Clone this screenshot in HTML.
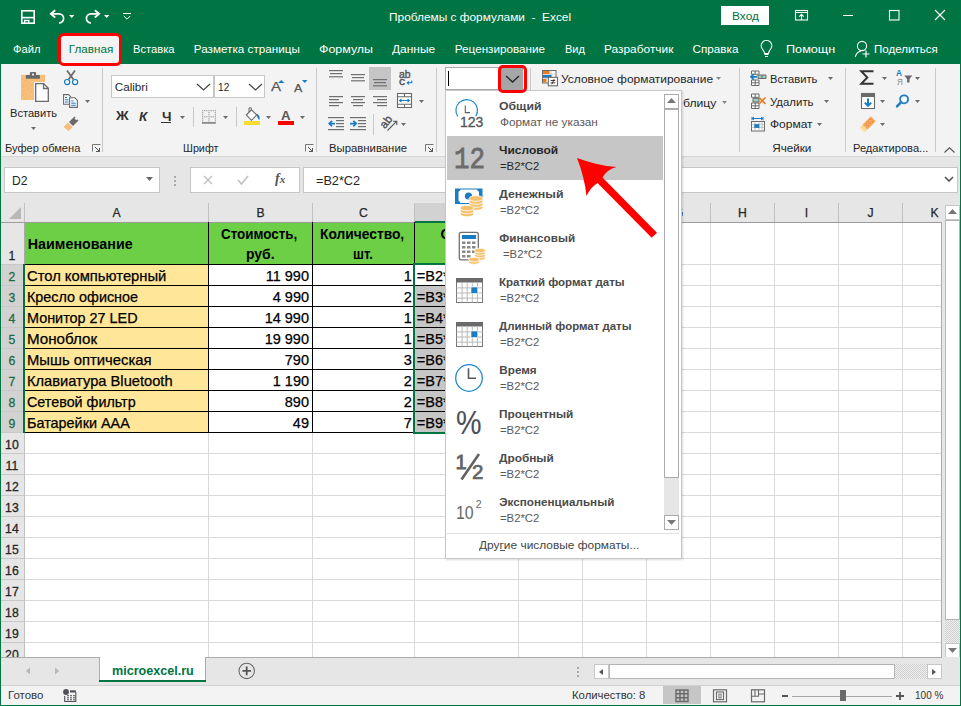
<!DOCTYPE html><html><head><meta charset="utf-8"><style>*{margin:0;padding:0;box-sizing:border-box}html,body{width:961px;height:706px;overflow:hidden;background:#fff;font-family:"Liberation Sans",sans-serif}.a{position:absolute;display:block}.t{position:absolute;white-space:nowrap;line-height:1}</style></head><body>
<div class="a" style="left:0px;top:0px;width:961px;height:64px;background:#007442;"></div>
<div class="a" style="left:1px;top:64px;width:959px;height:92px;background:#f3f3f3;"></div>
<div class="a" style="left:1px;top:156px;width:959px;height:1px;background:#d5d5d5;"></div>
<div class="a" style="left:1px;top:157px;width:959px;height:46px;background:#e6e6e6;"></div>
<div class="t" style="left:388.70px;top:10.90px;font-size:11.7px;color:#fff;transform:scaleX(1.0152);transform-origin:0 0;">Проблемы&#160;с&#160;формулами&#160;&#160;-&#160;&#160;Excel</div>
<div class="a" style="left:721px;top:6px;width:48px;height:19px;background:#fff;"></div>
<div class="t" style="left:731.50px;top:10.10px;font-size:11.7px;color:#007442;transform:scaleX(1.0202);transform-origin:0 0;">Вход</div>
<div class="t" style="left:13.20px;top:43.10px;font-size:11.7px;color:#fff;transform:scaleX(0.9561);transform-origin:0 0;">Файл</div>
<div class="t" style="left:132.80px;top:43.10px;font-size:11.7px;color:#fff;transform:scaleX(0.9566);transform-origin:0 0;">Вставка</div>
<div class="t" style="left:193.80px;top:43.10px;font-size:11.7px;color:#fff;">Разметка страницы</div>
<div class="t" style="left:319.40px;top:43.10px;font-size:11.7px;color:#fff;transform:scaleX(1.0607);transform-origin:0 0;">Формулы</div>
<div class="t" style="left:392.40px;top:43.10px;font-size:11.7px;color:#fff;transform:scaleX(1.0221);transform-origin:0 0;">Данные</div>
<div class="t" style="left:454.80px;top:43.10px;font-size:11.7px;color:#fff;">Рецензирование</div>
<div class="t" style="left:564.70px;top:43.10px;font-size:11.7px;color:#fff;transform:scaleX(0.9449);transform-origin:0 0;">Вид</div>
<div class="t" style="left:603.90px;top:43.10px;font-size:11.7px;color:#fff;transform:scaleX(1.0187);transform-origin:0 0;">Разработчик</div>
<div class="t" style="left:692.60px;top:43.10px;font-size:11.7px;color:#fff;">Справка</div>
<div class="t" style="left:786.10px;top:43.10px;font-size:11.7px;color:#fff;transform:scaleX(1.0823);transform-origin:0 0;">Помощн</div>
<div class="t" style="left:874.40px;top:43.10px;font-size:11.7px;color:#fff;transform:scaleX(0.9876);transform-origin:0 0;">Поделиться</div>
<div class="a" style="left:58px;top:33px;width:64px;height:33px;background:#f3f3f3;border:3px solid #ff0000;border-radius:6px;"></div>
<div class="t" style="left:68.80px;top:43.10px;font-size:11.7px;color:#007442;">Главная</div>
<div class="a" style="left:1px;top:203px;width:941px;height:19px;background:#e6e6e6;"></div>
<div class="a" style="left:24px;top:222px;width:918px;height:435px;background:#fff;"></div>
<div class="a" style="left:1px;top:222px;width:23px;height:435px;background:#e6e6e6;"></div>
<div class="a" style="left:415px;top:203px;width:103px;height:18px;background:#d2d2d2;"></div>
<div class="a" style="left:1px;top:264px;width:22px;height:168px;background:#d2d2d2;"></div>
<div class="a" style="left:208px;top:222px;width:1px;height:435px;background:#d9d9d9;"></div>
<div class="a" style="left:312px;top:222px;width:1px;height:435px;background:#d9d9d9;"></div>
<div class="a" style="left:414px;top:222px;width:1px;height:435px;background:#d9d9d9;"></div>
<div class="a" style="left:518px;top:222px;width:1px;height:435px;background:#d9d9d9;"></div>
<div class="a" style="left:582px;top:222px;width:1px;height:435px;background:#d9d9d9;"></div>
<div class="a" style="left:646px;top:222px;width:1px;height:435px;background:#d9d9d9;"></div>
<div class="a" style="left:710px;top:222px;width:1px;height:435px;background:#d9d9d9;"></div>
<div class="a" style="left:774px;top:222px;width:1px;height:435px;background:#d9d9d9;"></div>
<div class="a" style="left:838px;top:222px;width:1px;height:435px;background:#d9d9d9;"></div>
<div class="a" style="left:902px;top:222px;width:1px;height:435px;background:#d9d9d9;"></div>
<div class="a" style="left:24px;top:203px;width:1px;height:19px;background:#c0c0c0;"></div>
<div class="a" style="left:208px;top:203px;width:1px;height:19px;background:#c0c0c0;"></div>
<div class="a" style="left:312px;top:203px;width:1px;height:19px;background:#c0c0c0;"></div>
<div class="a" style="left:414px;top:203px;width:1px;height:19px;background:#c0c0c0;"></div>
<div class="a" style="left:518px;top:203px;width:1px;height:19px;background:#c0c0c0;"></div>
<div class="a" style="left:582px;top:203px;width:1px;height:19px;background:#c0c0c0;"></div>
<div class="a" style="left:646px;top:203px;width:1px;height:19px;background:#c0c0c0;"></div>
<div class="a" style="left:710px;top:203px;width:1px;height:19px;background:#c0c0c0;"></div>
<div class="a" style="left:774px;top:203px;width:1px;height:19px;background:#c0c0c0;"></div>
<div class="a" style="left:838px;top:203px;width:1px;height:19px;background:#c0c0c0;"></div>
<div class="a" style="left:902px;top:203px;width:1px;height:19px;background:#c0c0c0;"></div>
<div class="a" style="left:24px;top:222px;width:1px;height:435px;background:#c0c0c0;"></div>
<div class="a" style="left:25px;top:264px;width:917px;height:1px;background:#d9d9d9;"></div>
<div class="a" style="left:1px;top:264px;width:23px;height:1px;background:#c8c8c8;"></div>
<div class="a" style="left:25px;top:285px;width:917px;height:1px;background:#d9d9d9;"></div>
<div class="a" style="left:1px;top:285px;width:23px;height:1px;background:#c8c8c8;"></div>
<div class="a" style="left:25px;top:306px;width:917px;height:1px;background:#d9d9d9;"></div>
<div class="a" style="left:1px;top:306px;width:23px;height:1px;background:#c8c8c8;"></div>
<div class="a" style="left:25px;top:327px;width:917px;height:1px;background:#d9d9d9;"></div>
<div class="a" style="left:1px;top:327px;width:23px;height:1px;background:#c8c8c8;"></div>
<div class="a" style="left:25px;top:348px;width:917px;height:1px;background:#d9d9d9;"></div>
<div class="a" style="left:1px;top:348px;width:23px;height:1px;background:#c8c8c8;"></div>
<div class="a" style="left:25px;top:369px;width:917px;height:1px;background:#d9d9d9;"></div>
<div class="a" style="left:1px;top:369px;width:23px;height:1px;background:#c8c8c8;"></div>
<div class="a" style="left:25px;top:390px;width:917px;height:1px;background:#d9d9d9;"></div>
<div class="a" style="left:1px;top:390px;width:23px;height:1px;background:#c8c8c8;"></div>
<div class="a" style="left:25px;top:411px;width:917px;height:1px;background:#d9d9d9;"></div>
<div class="a" style="left:1px;top:411px;width:23px;height:1px;background:#c8c8c8;"></div>
<div class="a" style="left:25px;top:432px;width:917px;height:1px;background:#d9d9d9;"></div>
<div class="a" style="left:1px;top:432px;width:23px;height:1px;background:#c8c8c8;"></div>
<div class="a" style="left:25px;top:453px;width:917px;height:1px;background:#d9d9d9;"></div>
<div class="a" style="left:1px;top:453px;width:23px;height:1px;background:#c8c8c8;"></div>
<div class="a" style="left:25px;top:474px;width:917px;height:1px;background:#d9d9d9;"></div>
<div class="a" style="left:1px;top:474px;width:23px;height:1px;background:#c8c8c8;"></div>
<div class="a" style="left:25px;top:495px;width:917px;height:1px;background:#d9d9d9;"></div>
<div class="a" style="left:1px;top:495px;width:23px;height:1px;background:#c8c8c8;"></div>
<div class="a" style="left:25px;top:516px;width:917px;height:1px;background:#d9d9d9;"></div>
<div class="a" style="left:1px;top:516px;width:23px;height:1px;background:#c8c8c8;"></div>
<div class="a" style="left:25px;top:537px;width:917px;height:1px;background:#d9d9d9;"></div>
<div class="a" style="left:1px;top:537px;width:23px;height:1px;background:#c8c8c8;"></div>
<div class="a" style="left:25px;top:558px;width:917px;height:1px;background:#d9d9d9;"></div>
<div class="a" style="left:1px;top:558px;width:23px;height:1px;background:#c8c8c8;"></div>
<div class="a" style="left:25px;top:579px;width:917px;height:1px;background:#d9d9d9;"></div>
<div class="a" style="left:1px;top:579px;width:23px;height:1px;background:#c8c8c8;"></div>
<div class="a" style="left:25px;top:600px;width:917px;height:1px;background:#d9d9d9;"></div>
<div class="a" style="left:1px;top:600px;width:23px;height:1px;background:#c8c8c8;"></div>
<div class="a" style="left:25px;top:621px;width:917px;height:1px;background:#d9d9d9;"></div>
<div class="a" style="left:1px;top:621px;width:23px;height:1px;background:#c8c8c8;"></div>
<div class="a" style="left:25px;top:642px;width:917px;height:1px;background:#d9d9d9;"></div>
<div class="a" style="left:1px;top:642px;width:23px;height:1px;background:#c8c8c8;"></div>
<div class="a" style="left:1px;top:222px;width:941px;height:1px;background:#9b9b9b;"></div>
<div class="a" style="left:941px;top:222px;width:1px;height:435px;background:#ababab;"></div>
<div class="a" style="left:942px;top:203px;width:18px;height:454px;background:#e6e6e6;"></div>
<div class="a" style="left:25px;top:223px;width:389px;height:41px;background:#6ccf46;"></div>
<div class="a" style="left:415px;top:223px;width:103px;height:41px;background:#6ccf46;"></div>
<div class="a" style="left:25px;top:265px;width:183px;height:20px;background:#ffe699;"></div>
<div class="a" style="left:25px;top:286px;width:183px;height:20px;background:#ffe699;"></div>
<div class="a" style="left:25px;top:307px;width:183px;height:20px;background:#ffe699;"></div>
<div class="a" style="left:25px;top:328px;width:183px;height:20px;background:#ffe699;"></div>
<div class="a" style="left:25px;top:349px;width:183px;height:20px;background:#ffe699;"></div>
<div class="a" style="left:25px;top:370px;width:183px;height:20px;background:#ffe699;"></div>
<div class="a" style="left:25px;top:391px;width:183px;height:20px;background:#ffe699;"></div>
<div class="a" style="left:25px;top:412px;width:183px;height:20px;background:#ffe699;"></div>
<div class="a" style="left:24px;top:222px;width:1px;height:211px;background:#000;"></div>
<div class="a" style="left:208px;top:222px;width:1px;height:211px;background:#000;"></div>
<div class="a" style="left:312px;top:222px;width:1px;height:211px;background:#000;"></div>
<div class="a" style="left:414px;top:222px;width:1px;height:211px;background:#000;"></div>
<div class="a" style="left:518px;top:222px;width:1px;height:211px;background:#000;"></div>
<div class="a" style="left:24px;top:264px;width:495px;height:1px;background:#000;"></div>
<div class="a" style="left:24px;top:285px;width:495px;height:1px;background:#000;"></div>
<div class="a" style="left:24px;top:306px;width:495px;height:1px;background:#000;"></div>
<div class="a" style="left:24px;top:327px;width:495px;height:1px;background:#000;"></div>
<div class="a" style="left:24px;top:348px;width:495px;height:1px;background:#000;"></div>
<div class="a" style="left:24px;top:369px;width:495px;height:1px;background:#000;"></div>
<div class="a" style="left:24px;top:390px;width:495px;height:1px;background:#000;"></div>
<div class="a" style="left:24px;top:411px;width:495px;height:1px;background:#000;"></div>
<div class="a" style="left:24px;top:432px;width:495px;height:1px;background:#000;"></div>
<div class="a" style="left:24px;top:222px;width:1px;height:42px;background:#ababab;"></div>
<div class="a" style="left:415px;top:286px;width:103px;height:20px;background:#c6c6c6;"></div>
<div class="a" style="left:415px;top:307px;width:103px;height:20px;background:#c6c6c6;"></div>
<div class="a" style="left:415px;top:328px;width:103px;height:20px;background:#c6c6c6;"></div>
<div class="a" style="left:415px;top:349px;width:103px;height:20px;background:#c6c6c6;"></div>
<div class="a" style="left:415px;top:370px;width:103px;height:20px;background:#c6c6c6;"></div>
<div class="a" style="left:415px;top:391px;width:103px;height:20px;background:#c6c6c6;"></div>
<div class="a" style="left:415px;top:412px;width:103px;height:20px;background:#c6c6c6;"></div>
<div class="a" style="left:413px;top:263px;width:2px;height:171px;background:#007442;"></div>
<div class="a" style="left:413px;top:263px;width:106px;height:2px;background:#007442;"></div>
<div class="a" style="left:413px;top:432px;width:106px;height:2px;background:#007442;"></div>
<div class="a" style="left:517px;top:263px;width:2px;height:171px;background:#007442;"></div>
<div class="a" style="left:415px;top:221px;width:103px;height:2px;background:#007442;"></div>
<div class="a" style="left:23px;top:264px;width:2px;height:169px;background:#007442;"></div>
<div class="t" style="left:112.43px;top:207.37px;font-size:12.2px;color:#262626;-webkit-text-stroke:0.25px #262626;">A</div>
<div class="t" style="left:256.43px;top:207.37px;font-size:12.2px;color:#262626;-webkit-text-stroke:0.25px #262626;">B</div>
<div class="t" style="left:359.09px;top:207.37px;font-size:12.2px;color:#262626;-webkit-text-stroke:0.25px #262626;">C</div>
<div class="t" style="left:462.09px;top:207.37px;font-size:12.2px;color:#007442;-webkit-text-stroke:0.25px #007442;">D</div>
<div class="t" style="left:546.43px;top:207.37px;font-size:12.2px;color:#262626;-webkit-text-stroke:0.25px #262626;">E</div>
<div class="t" style="left:610.77px;top:207.37px;font-size:12.2px;color:#262626;-webkit-text-stroke:0.25px #262626;">F</div>
<div class="t" style="left:673.76px;top:207.37px;font-size:12.2px;color:#262626;-webkit-text-stroke:0.25px #262626;">G</div>
<div class="t" style="left:738.09px;top:207.37px;font-size:12.2px;color:#262626;-webkit-text-stroke:0.25px #262626;">H</div>
<div class="t" style="left:804.81px;top:207.37px;font-size:12.2px;color:#262626;-webkit-text-stroke:0.25px #262626;">I</div>
<div class="t" style="left:867.45px;top:207.37px;font-size:12.2px;color:#262626;-webkit-text-stroke:0.25px #262626;">J</div>
<div class="t" style="left:930.43px;top:207.37px;font-size:12.2px;color:#262626;-webkit-text-stroke:0.25px #262626;">K</div>
<div class="t" style="left:8.51px;top:250.07px;font-size:12.2px;color:#262626;-webkit-text-stroke:0.3px #262626;">1</div>
<div class="t" style="left:8.51px;top:271.07px;font-size:12.2px;color:#1d6b3f;-webkit-text-stroke:0.3px #1d6b3f;">2</div>
<div class="t" style="left:8.51px;top:292.07px;font-size:12.2px;color:#1d6b3f;-webkit-text-stroke:0.3px #1d6b3f;">3</div>
<div class="t" style="left:8.51px;top:313.07px;font-size:12.2px;color:#1d6b3f;-webkit-text-stroke:0.3px #1d6b3f;">4</div>
<div class="t" style="left:8.51px;top:334.07px;font-size:12.2px;color:#1d6b3f;-webkit-text-stroke:0.3px #1d6b3f;">5</div>
<div class="t" style="left:8.51px;top:355.07px;font-size:12.2px;color:#1d6b3f;-webkit-text-stroke:0.3px #1d6b3f;">6</div>
<div class="t" style="left:8.51px;top:376.07px;font-size:12.2px;color:#1d6b3f;-webkit-text-stroke:0.3px #1d6b3f;">7</div>
<div class="t" style="left:8.51px;top:397.07px;font-size:12.2px;color:#1d6b3f;-webkit-text-stroke:0.3px #1d6b3f;">8</div>
<div class="t" style="left:8.51px;top:418.07px;font-size:12.2px;color:#1d6b3f;-webkit-text-stroke:0.3px #1d6b3f;">9</div>
<div class="t" style="left:5.12px;top:439.07px;font-size:12.2px;color:#262626;-webkit-text-stroke:0.3px #262626;">10</div>
<div class="t" style="left:5.57px;top:460.07px;font-size:12.2px;color:#262626;-webkit-text-stroke:0.3px #262626;">11</div>
<div class="t" style="left:5.12px;top:481.07px;font-size:12.2px;color:#262626;-webkit-text-stroke:0.3px #262626;">12</div>
<div class="t" style="left:5.12px;top:502.07px;font-size:12.2px;color:#262626;-webkit-text-stroke:0.3px #262626;">13</div>
<div class="t" style="left:5.12px;top:523.07px;font-size:12.2px;color:#262626;-webkit-text-stroke:0.3px #262626;">14</div>
<div class="t" style="left:5.12px;top:544.07px;font-size:12.2px;color:#262626;-webkit-text-stroke:0.3px #262626;">15</div>
<div class="t" style="left:5.12px;top:565.07px;font-size:12.2px;color:#262626;-webkit-text-stroke:0.3px #262626;">16</div>
<div class="t" style="left:5.12px;top:586.07px;font-size:12.2px;color:#262626;-webkit-text-stroke:0.3px #262626;">17</div>
<div class="t" style="left:5.12px;top:607.07px;font-size:12.2px;color:#262626;-webkit-text-stroke:0.3px #262626;">18</div>
<div class="t" style="left:5.12px;top:628.07px;font-size:12.2px;color:#262626;-webkit-text-stroke:0.3px #262626;">19</div>
<div class="t" style="left:5.12px;top:649.07px;font-size:12.2px;color:#262626;-webkit-text-stroke:0.3px #262626;">20</div>
<div class="t" style="left:27.80px;top:236.90px;font-size:14.3px;color:#000;font-weight:bold;">Наименование</div>
<div class="t" style="left:221.35px;top:226.70px;font-size:14.3px;color:#000;font-weight:bold;transform:scaleX(0.9383);transform-origin:0 0;">Стоимость,</div>
<div class="t" style="left:245.70px;top:246.80px;font-size:14.3px;color:#000;font-weight:bold;transform:scaleX(0.9760);transform-origin:0 0;">руб.</div>
<div class="t" style="left:320.40px;top:226.70px;font-size:14.3px;color:#000;font-weight:bold;transform:scaleX(0.9644);transform-origin:0 0;">Количество,</div>
<div class="t" style="left:353.05px;top:246.80px;font-size:14.3px;color:#000;font-weight:bold;transform:scaleX(0.9197);transform-origin:0 0;">шт.</div>
<div class="t" style="left:440.51px;top:226.70px;font-size:14.3px;color:#000;font-weight:bold;">Сумма,</div>
<div class="t" style="left:27.30px;top:269.13px;font-size:14.5px;color:#000;transform:scaleX(1.0182);transform-origin:0 0;-webkit-text-stroke:0.25px #000;">Стол компьютерный</div>
<div class="t" style="left:265.73px;top:269.13px;font-size:14.5px;color:#000;-webkit-text-stroke:0.25px #000;">11 990</div>
<div class="t" style="left:403.74px;top:269.13px;font-size:14.5px;color:#000;-webkit-text-stroke:0.25px #000;">1</div>
<div class="t" style="left:416.80px;top:269.13px;font-size:14.5px;color:#000;-webkit-text-stroke:0.25px #000;">=B2*C2</div>
<div class="t" style="left:27.30px;top:290.13px;font-size:14.5px;color:#000;transform:scaleX(0.9909);transform-origin:0 0;-webkit-text-stroke:0.25px #000;">Кресло офисное</div>
<div class="t" style="left:272.72px;top:290.13px;font-size:14.5px;color:#000;-webkit-text-stroke:0.25px #000;">4 990</div>
<div class="t" style="left:403.74px;top:290.13px;font-size:14.5px;color:#000;-webkit-text-stroke:0.25px #000;">2</div>
<div class="t" style="left:416.80px;top:290.13px;font-size:14.5px;color:#000;-webkit-text-stroke:0.25px #000;">=B3*C3</div>
<div class="t" style="left:27.30px;top:311.13px;font-size:14.5px;color:#000;transform:scaleX(0.9928);transform-origin:0 0;-webkit-text-stroke:0.25px #000;">Монитор 27 LED</div>
<div class="t" style="left:264.65px;top:311.13px;font-size:14.5px;color:#000;-webkit-text-stroke:0.25px #000;">14 990</div>
<div class="t" style="left:403.74px;top:311.13px;font-size:14.5px;color:#000;-webkit-text-stroke:0.25px #000;">1</div>
<div class="t" style="left:416.80px;top:311.13px;font-size:14.5px;color:#000;-webkit-text-stroke:0.25px #000;">=B4*C4</div>
<div class="t" style="left:27.30px;top:332.13px;font-size:14.5px;color:#000;transform:scaleX(1.0453);transform-origin:0 0;-webkit-text-stroke:0.25px #000;">Моноблок</div>
<div class="t" style="left:264.65px;top:332.13px;font-size:14.5px;color:#000;-webkit-text-stroke:0.25px #000;">19 990</div>
<div class="t" style="left:403.74px;top:332.13px;font-size:14.5px;color:#000;-webkit-text-stroke:0.25px #000;">1</div>
<div class="t" style="left:416.80px;top:332.13px;font-size:14.5px;color:#000;-webkit-text-stroke:0.25px #000;">=B5*C5</div>
<div class="t" style="left:27.30px;top:353.13px;font-size:14.5px;color:#000;transform:scaleX(1.0229);transform-origin:0 0;-webkit-text-stroke:0.25px #000;">Мышь оптическая</div>
<div class="t" style="left:284.81px;top:353.13px;font-size:14.5px;color:#000;-webkit-text-stroke:0.25px #000;">790</div>
<div class="t" style="left:403.74px;top:353.13px;font-size:14.5px;color:#000;-webkit-text-stroke:0.25px #000;">3</div>
<div class="t" style="left:416.80px;top:353.13px;font-size:14.5px;color:#000;-webkit-text-stroke:0.25px #000;">=B6*C6</div>
<div class="t" style="left:27.30px;top:374.13px;font-size:14.5px;color:#000;transform:scaleX(1.0123);transform-origin:0 0;-webkit-text-stroke:0.25px #000;">Клавиатура Bluetooth</div>
<div class="t" style="left:272.72px;top:374.13px;font-size:14.5px;color:#000;-webkit-text-stroke:0.25px #000;">1 190</div>
<div class="t" style="left:403.74px;top:374.13px;font-size:14.5px;color:#000;-webkit-text-stroke:0.25px #000;">2</div>
<div class="t" style="left:416.80px;top:374.13px;font-size:14.5px;color:#000;-webkit-text-stroke:0.25px #000;">=B7*C7</div>
<div class="t" style="left:27.30px;top:395.13px;font-size:14.5px;color:#000;transform:scaleX(0.9878);transform-origin:0 0;-webkit-text-stroke:0.25px #000;">Сетевой фильтр</div>
<div class="t" style="left:284.81px;top:395.13px;font-size:14.5px;color:#000;-webkit-text-stroke:0.25px #000;">890</div>
<div class="t" style="left:403.74px;top:395.13px;font-size:14.5px;color:#000;-webkit-text-stroke:0.25px #000;">2</div>
<div class="t" style="left:416.80px;top:395.13px;font-size:14.5px;color:#000;-webkit-text-stroke:0.25px #000;">=B8*C8</div>
<div class="t" style="left:27.30px;top:416.13px;font-size:14.5px;color:#000;transform:scaleX(0.9931);transform-origin:0 0;-webkit-text-stroke:0.25px #000;">Батарейки AAA</div>
<div class="t" style="left:292.87px;top:416.13px;font-size:14.5px;color:#000;-webkit-text-stroke:0.25px #000;">49</div>
<div class="t" style="left:403.74px;top:416.13px;font-size:14.5px;color:#000;-webkit-text-stroke:0.25px #000;">7</div>
<div class="t" style="left:416.80px;top:416.13px;font-size:14.5px;color:#000;-webkit-text-stroke:0.25px #000;">=B9*C9</div>
<div class="a" style="left:4px;top:167px;width:156px;height:26px;background:#fff;border:1px solid #c6c6c6;"></div>
<div class="t" style="left:11.50px;top:174.30px;font-size:13px;color:#262626;transform:scaleX(0.9327);transform-origin:0 0;">D2</div>
<svg class="a" style="left:146px;top:177px;" width="7" height="4" viewBox="0 0 7 4"><path d="M0 0H7L3.5 4Z" fill="#6a6a6a"/></svg>
<div class="a" style="left:174px;top:176px;width:2px;height:2px;background:#a8a8a8;"></div>
<div class="a" style="left:174px;top:180px;width:2px;height:2px;background:#a8a8a8;"></div>
<div class="a" style="left:174px;top:184px;width:2px;height:2px;background:#a8a8a8;"></div>
<div class="a" style="left:190px;top:167px;width:110px;height:26px;background:#fff;border:1px solid #c6c6c6;"></div>
<svg class="a" style="left:203px;top:175px;" width="10" height="10" viewBox="0 0 10 10"><path d="M1 1L9 9M9 1L1 9" stroke="#c0c0c0" stroke-width="1.3"/></svg>
<svg class="a" style="left:237px;top:175px;" width="12" height="10" viewBox="0 0 12 10"><path d="M1 5L4.5 9L11 1" stroke="#c0c0c0" stroke-width="1.6" fill="none"/></svg>
<div class="t" style="left:275px;top:172px;font-family:'Liberation Serif',serif;font-style:italic;font-weight:bold;font-size:14px;color:#555">f<span style="font-size:11px">x</span></div>
<div class="a" style="left:303px;top:167px;width:655px;height:26px;background:#fff;border:1px solid #c6c6c6;"></div>
<div class="t" style="left:315.50px;top:174.30px;font-size:13px;color:#262626;transform:scaleX(0.9741);transform-origin:0 0;">=B2*C2</div>
<svg class="a" style="left:944px;top:176px;" width="10" height="6" viewBox="0 0 10 6"><path d="M1 1L5 5L9 1" stroke="#555" stroke-width="1.6" fill="none"/></svg>
<svg class="a" style="left:9px;top:207px;" width="13" height="13" viewBox="0 0 13 13"><path d="M12 0V12H0Z" fill="#b8b8b8"/></svg>
<div class="a" style="left:945px;top:205px;width:15px;height:15px;background:#fff;border:1px solid #c6c6c6;"></div>
<svg class="a" style="left:948px;top:209px;" width="9" height="5" viewBox="0 0 9 5"><path d="M0 5H9L4.5 0Z" fill="#777"/></svg>
<div class="a" style="left:945px;top:220px;width:15px;height:400px;background:#fff;border:1px solid #b4b4b4;"></div>
<div class="a" style="left:945px;top:620px;width:15px;height:23px;background:#e4e4e4;background-image:repeating-conic-gradient(#cfcfcf 0 25%, #efefef 0 50%);background-size:2px 2px;"></div>
<div class="a" style="left:945px;top:643px;width:15px;height:15px;background:#fff;border:1px solid #c6c6c6;"></div>
<svg class="a" style="left:948px;top:648px;" width="9" height="5" viewBox="0 0 9 5"><path d="M0 0H9L4.5 5Z" fill="#777"/></svg>
<div class="a" style="left:102px;top:68px;width:1px;height:84px;background:#c8c8c8;"></div>
<div class="a" style="left:316px;top:68px;width:1px;height:84px;background:#c8c8c8;"></div>
<div class="a" style="left:436px;top:68px;width:1px;height:84px;background:#c8c8c8;"></div>
<div class="a" style="left:530px;top:68px;width:1px;height:84px;background:#c8c8c8;"></div>
<div class="a" style="left:739px;top:68px;width:1px;height:84px;background:#c8c8c8;"></div>
<div class="a" style="left:845px;top:68px;width:1px;height:84px;background:#c8c8c8;"></div>
<div class="a" style="left:935px;top:68px;width:1px;height:84px;background:#c8c8c8;"></div>
<div class="t" style="left:4.60px;top:141.80px;font-size:11.7px;color:#262626;transform:scaleX(0.9485);transform-origin:0 0;">Буфер обмена</div>
<svg class="a" style="left:92px;top:144px;" width="9" height="8" viewBox="0 0 9 8"><path d="M0.5 7.5V0.5H8.5" stroke="#777" fill="none"/><path d="M3 3L7.5 7.5M7.5 4V7.5H4" stroke="#555" stroke-width="1" fill="none"/></svg>
<div class="t" style="left:183.00px;top:141.80px;font-size:11.7px;color:#262626;transform:scaleX(0.9222);transform-origin:0 0;">Шрифт</div>
<svg class="a" style="left:305px;top:144px;" width="9" height="8" viewBox="0 0 9 8"><path d="M0.5 7.5V0.5H8.5" stroke="#777" fill="none"/><path d="M3 3L7.5 7.5M7.5 4V7.5H4" stroke="#555" stroke-width="1" fill="none"/></svg>
<div class="t" style="left:329.30px;top:141.80px;font-size:11.7px;color:#262626;transform:scaleX(0.9698);transform-origin:0 0;">Выравнивание</div>
<svg class="a" style="left:425px;top:144px;" width="9" height="8" viewBox="0 0 9 8"><path d="M0.5 7.5V0.5H8.5" stroke="#777" fill="none"/><path d="M3 3L7.5 7.5M7.5 4V7.5H4" stroke="#555" stroke-width="1" fill="none"/></svg>
<div class="t" style="left:772.20px;top:141.80px;font-size:11.7px;color:#262626;">Ячейки</div>
<div class="t" style="left:852.60px;top:141.80px;font-size:11.7px;color:#262626;transform:scaleX(0.9500);transform-origin:0 0;">Редактирова...</div>
<svg class="a" style="left:944px;top:147px;" width="11" height="6" viewBox="0 0 11 6"><path d="M0.5 5.5L5.5 0.8L10.5 5.5" stroke="#555" stroke-width="1.1" fill="none"/></svg>
<div class="t" style="left:9.60px;top:106.80px;font-size:11.7px;color:#262626;transform:scaleX(0.9498);transform-origin:0 0;">Вставить</div>
<svg class="a" style="left:30.5px;top:127px;" width="5" height="3" viewBox="0 0 5 3"><path d="M0 0H5L2.5 3Z" fill="#6a6a6a"/></svg>
<svg class="a" style="left:85px;top:100px;" width="5" height="3" viewBox="0 0 5 3"><path d="M0 0H5L2.5 3Z" fill="#6a6a6a"/></svg>
<div class="a" style="left:111px;top:75px;width:103px;height:23px;background:#fff;border:1px solid #c6c6c6;"></div>
<div class="t" style="left:114.70px;top:81.00px;font-size:11.7px;color:#262626;">Calibri</div>
<svg class="a" style="left:196px;top:83px;" width="15" height="8" viewBox="0 0 15 8"><path d="M1 1L7.5 7L14 1" stroke="#444" stroke-width="1.2" fill="none"/></svg>
<div class="a" style="left:214px;top:75px;width:51px;height:23px;background:#fff;border:1px solid #c6c6c6;"></div>
<div class="t" style="left:217.90px;top:81.00px;font-size:11.7px;color:#262626;transform:scaleX(0.8684);transform-origin:0 0;">12</div>
<svg class="a" style="left:247.5px;top:83px;" width="15" height="8" viewBox="0 0 15 8"><path d="M1 1L7.5 7L14 1" stroke="#444" stroke-width="1.2" fill="none"/></svg>
<div class="t" style="left:115.60px;top:110.32px;font-size:12.5px;color:#333;font-weight:bold;transform:scaleX(1.1154);transform-origin:0 0;">Ж</div>
<div class="t" style="left:139.00px;top:110.74px;font-size:12px;color:#333;font-weight:bold;transform:scaleX(1.1196);transform-origin:0 0;font-style:italic;">К</div>
<div class="t" style="left:161.50px;top:110.74px;font-size:12px;color:#333;font-weight:bold;transform:scaleX(1.1267);transform-origin:0 0;">Ч</div>
<div class="a" style="left:161px;top:122px;width:10px;height:1.3px;background:#333;"></div>
<svg class="a" style="left:180.3px;top:116px;" width="5" height="3" viewBox="0 0 5 3"><path d="M0 0H5L2.5 3Z" fill="#6a6a6a"/></svg>
<div class="a" style="left:193px;top:107px;width:1px;height:20px;background:#c8c8c8;"></div>
<svg class="a" style="left:223.2px;top:116px;" width="5" height="3" viewBox="0 0 5 3"><path d="M0 0H5L2.5 3Z" fill="#6a6a6a"/></svg>
<div class="a" style="left:236px;top:107px;width:1px;height:20px;background:#c8c8c8;"></div>
<svg class="a" style="left:266.2px;top:116px;" width="5" height="3" viewBox="0 0 5 3"><path d="M0 0H5L2.5 3Z" fill="#6a6a6a"/></svg>
<svg class="a" style="left:300.2px;top:116px;" width="5" height="3" viewBox="0 0 5 3"><path d="M0 0H5L2.5 3Z" fill="#6a6a6a"/></svg>
<svg class="a" style="left:419px;top:100px;" width="5" height="3" viewBox="0 0 5 3"><path d="M0 0H5L2.5 3Z" fill="#6a6a6a"/></svg>
<div class="a" style="left:373px;top:114px;width:1px;height:21px;background:#c8c8c8;"></div>
<svg class="a" style="left:401px;top:123px;" width="5" height="3" viewBox="0 0 5 3"><path d="M0 0H5L2.5 3Z" fill="#6a6a6a"/></svg>
<div class="t" style="left:560.80px;top:72.90px;font-size:11.7px;color:#262626;transform:scaleX(1.0226);transform-origin:0 0;">Условное форматирование</div>
<svg class="a" style="left:715.5px;top:77px;" width="5" height="3" viewBox="0 0 5 3"><path d="M0 0H5L2.5 3Z" fill="#888"/></svg>
<div class="t" style="left:683.00px;top:97.10px;font-size:11.7px;color:#262626;transform:scaleX(1.0408);transform-origin:0 0;">блицу</div>
<svg class="a" style="left:722px;top:101px;" width="5" height="3" viewBox="0 0 5 3"><path d="M0 0H5L2.5 3Z" fill="#888"/></svg>
<div class="t" style="left:770.40px;top:72.70px;font-size:11.7px;color:#262626;transform:scaleX(0.9558);transform-origin:0 0;">Вставить</div>
<svg class="a" style="left:828px;top:77px;" width="5" height="3" viewBox="0 0 5 3"><path d="M0 0H5L2.5 3Z" fill="#6a6a6a"/></svg>
<div class="t" style="left:770.40px;top:95.60px;font-size:11.7px;color:#262626;transform:scaleX(0.9761);transform-origin:0 0;">Удалить</div>
<svg class="a" style="left:824px;top:100px;" width="5" height="3" viewBox="0 0 5 3"><path d="M0 0H5L2.5 3Z" fill="#6a6a6a"/></svg>
<div class="t" style="left:770.40px;top:118.30px;font-size:11.7px;color:#262626;transform:scaleX(1.0251);transform-origin:0 0;">Формат</div>
<svg class="a" style="left:816.5px;top:123px;" width="5" height="3" viewBox="0 0 5 3"><path d="M0 0H5L2.5 3Z" fill="#6a6a6a"/></svg>
<svg class="a" style="left:881.8px;top:77px;" width="5" height="3" viewBox="0 0 5 3"><path d="M0 0H5L2.5 3Z" fill="#6a6a6a"/></svg>
<svg class="a" style="left:915px;top:77px;" width="5" height="3" viewBox="0 0 5 3"><path d="M0 0H5L2.5 3Z" fill="#6a6a6a"/></svg>
<svg class="a" style="left:880px;top:100px;" width="5" height="3" viewBox="0 0 5 3"><path d="M0 0H5L2.5 3Z" fill="#6a6a6a"/></svg>
<svg class="a" style="left:915px;top:100px;" width="5" height="3" viewBox="0 0 5 3"><path d="M0 0H5L2.5 3Z" fill="#6a6a6a"/></svg>
<svg class="a" style="left:880px;top:123px;" width="5" height="3" viewBox="0 0 5 3"><path d="M0 0H5L2.5 3Z" fill="#6a6a6a"/></svg>
<div class="a" style="left:1px;top:657px;width:959px;height:28px;background:#e6e6e6;"></div>
<div class="a" style="left:1px;top:657px;width:99px;height:1px;background:#ababab;"></div>
<div class="a" style="left:206px;top:657px;width:736px;height:1px;background:#ababab;"></div>
<div class="a" style="left:1px;top:685px;width:959px;height:1px;background:#d0d0d0;"></div>
<div class="a" style="left:99px;top:657px;width:107px;height:25px;background:#fff;border-left:1px solid #ababab;border-right:1px solid #ababab;"></div>
<div class="a" style="left:99px;top:680px;width:107px;height:2px;background:#007442;"></div>
<div class="t" style="left:111.50px;top:664.54px;font-size:12px;color:#007442;font-weight:bold;transform:scaleX(1.0482);transform-origin:0 0;">microexcel.ru</div>
<div class="a" style="left:1px;top:686px;width:959px;height:19px;background:#f3f3f3;"></div>
<div class="t" style="left:7.75px;top:688.85px;font-size:11.7px;color:#333;transform:scaleX(0.9799);transform-origin:0 0;">Готово</div>
<div class="t" style="left:571.50px;top:688.85px;font-size:11.7px;color:#333;transform:scaleX(0.9692);transform-origin:0 0;">Количество: 8</div>
<div class="t" style="left:914.60px;top:688.85px;font-size:11.7px;color:#333;transform:scaleX(0.8561);transform-origin:0 0;">100 %</div>
<div class="a" style="left:0px;top:0px;width:1px;height:706px;background:#007442;"></div>
<div class="a" style="left:960px;top:0px;width:1px;height:706px;background:#007442;"></div>
<div class="a" style="left:0px;top:705px;width:961px;height:1px;background:#007442;"></div>
<svg class="a" style="left:20px;top:9px;" width="16" height="16" viewBox="0 0 16 16"><rect x="1.8" y="1.8" width="12.4" height="12.4" fill="none" stroke="#ffffff" stroke-width="1.6"/><path d="M2 8.6H14" stroke="#ffffff" stroke-width="1.6"/><path d="M4.6 14V11.5H8.8V14" stroke="#ffffff" stroke-width="1.4" fill="none"/></svg>
<svg class="a" style="left:48px;top:8px;" width="18" height="16" viewBox="0 0 18 16"><path d="M3.5 5.8H11A4.6 4.6 0 0 1 11 15" stroke="#ffffff" stroke-width="1.7" fill="none"/><path d="M7.2 2.2L2.8 5.8L7.2 9.5" stroke="#ffffff" stroke-width="1.8" fill="none"/></svg>
<svg class="a" style="left:69px;top:15px;" width="6" height="3" viewBox="0 0 6 3"><path d="M0 0H5.4L2.7 3Z" fill="#ffffff"/></svg>
<svg class="a" style="left:84px;top:8px;" width="18" height="16" viewBox="0 0 18 16"><path d="M14.5 5.8H7A4.6 4.6 0 0 0 7 15" stroke="#ffffff" stroke-width="1.7" fill="none"/><path d="M10.8 2.2L15.2 5.8L10.8 9.5" stroke="#ffffff" stroke-width="1.8" fill="none"/></svg>
<svg class="a" style="left:104px;top:15px;" width="6" height="3" viewBox="0 0 6 3"><path d="M0 0H5.4L2.7 3Z" fill="#ffffff"/></svg>
<svg class="a" style="left:122px;top:12px;" width="10" height="9" viewBox="0 0 10 9"><path d="M1 1.5H9" stroke="#ffffff" stroke-width="1"/><path d="M1.8 4L5 7.2L8.2 4" stroke="#ffffff" stroke-width="1" fill="none"/></svg>
<svg class="a" style="left:794px;top:9px;" width="15" height="12" viewBox="0 0 15 12"><rect x="1.5" y="1.5" width="12" height="9.5" fill="none" stroke="#ffffff" stroke-width="1.1"/><path d="M1.5 3.5H13.5" stroke="#ffffff" stroke-width="1"/><path d="M7.5 11V5.5M5.3 7.6L7.5 5.4L9.7 7.6" stroke="#ffffff" stroke-width="1.1" fill="none"/></svg>
<div class="a" style="left:843px;top:15px;width:10px;height:1px;background:#ffffff;"></div>
<svg class="a" style="left:888px;top:9px;" width="12" height="12" viewBox="0 0 12 12"><rect x="1.5" y="1.5" width="9.5" height="9.5" fill="none" stroke="#ffffff" stroke-width="1.1"/></svg>
<svg class="a" style="left:934px;top:9px;" width="12" height="12" viewBox="0 0 12 12"><path d="M1 1L11 11M11 1L1 11" stroke="#ffffff" stroke-width="1.1"/></svg>
<svg class="a" style="left:759px;top:40px;" width="15" height="19" viewBox="0 0 15 19"><path d="M5.5 13.5Q5.3 11 3.2 8.8A5.3 5.3 0 1 1 11.8 8.8Q9.7 11 9.5 13.5Z" fill="none" stroke="#ffffff" stroke-width="1.1"/><path d="M5.5 14.5H9.5M6 16.5H9" stroke="#ffffff" stroke-width="1.1"/></svg>
<svg class="a" style="left:853px;top:40px;" width="19" height="19" viewBox="0 0 19 19"><circle cx="9" cy="6" r="4.6" fill="none" stroke="#ffffff" stroke-width="1.1"/><path d="M2.3 16.8Q3.5 12 8 11" fill="none" stroke="#ffffff" stroke-width="1.1"/><path d="M13 10.5V17.5M9.5 14H16.5" stroke="#ffffff" stroke-width="1.2"/></svg>
<svg class="a" style="left:20px;top:70px;" width="30" height="34" viewBox="0 0 30 34"><rect x="1" y="4.8" width="24" height="25.2" fill="#f7bf7a"/><g fill="#f08a50" opacity="0.55"><circle cx="3" cy="9" r="0.55"/><circle cx="5" cy="11" r="0.55"/><circle cx="7" cy="10" r="0.55"/><circle cx="4" cy="14" r="0.55"/><circle cx="8" cy="13" r="0.55"/><circle cx="3" cy="17" r="0.55"/><circle cx="6" cy="16" r="0.55"/><circle cx="9" cy="18" r="0.55"/><circle cx="4" cy="21" r="0.55"/><circle cx="7" cy="20" r="0.55"/><circle cx="10" cy="22" r="0.55"/><circle cx="3" cy="25" r="0.55"/><circle cx="6" cy="24" r="0.55"/><circle cx="9" cy="26" r="0.55"/><circle cx="5" cy="28" r="0.55"/><circle cx="11" cy="15" r="0.55"/><circle cx="12" cy="19" r="0.55"/></g><rect x="5.9" y="5" width="14" height="3.7" rx="0.5" fill="#6a6a6a"/><rect x="9.9" y="2" width="6.2" height="4" rx="1.2" fill="#6a6a6a"/><rect x="12" y="3.6" width="2" height="1.8" fill="#f3f3f3"/><rect x="14" y="12" width="16" height="22" fill="#f3f3f3"/><path d="M15.7 13.7H23.7L28.3 18.3V31.4H15.7Z" fill="#fff" stroke="#6a6a6a" stroke-width="1.3"/><path d="M23.5 13.7V18.5H28.3" fill="none" stroke="#6a6a6a" stroke-width="1.3"/></svg>
<svg class="a" style="left:62px;top:69px;" width="18" height="18" viewBox="0 0 18 18"><path d="M5 1.5L11.5 10.5M13 1.5L6.5 10.5" stroke="#6a6a6a" stroke-width="1.8"/><circle cx="5.1" cy="13.1" r="2.6" fill="none" stroke="#1a7cc4" stroke-width="1.2"/><circle cx="13.1" cy="13.1" r="2.6" fill="none" stroke="#1a7cc4" stroke-width="1.2"/></svg>
<svg class="a" style="left:62px;top:93px;" width="18" height="16" viewBox="0 0 18 16"><path d="M1.6 1.6H6.5L8.6 3.7V11.2H1.6Z" fill="#fff" stroke="#6a6a6a" stroke-width="1.1"/><path d="M3 4.5H5M3 6.8H6.5M3 9H6.5" stroke="#1a7cc4" stroke-width="1"/><path d="M7.6 4.8H12.8L15.4 7.4V14.4H7.6Z" fill="#fff" stroke="#6a6a6a" stroke-width="1.1"/><path d="M9.2 8H11.5M9.2 10.2H13.8M9.2 12.3H13.8" stroke="#1a7cc4" stroke-width="1"/></svg>
<svg class="a" style="left:62px;top:115px;" width="18" height="18" viewBox="0 0 18 18"><path d="M1.5 12L6 7.5L10.5 12L6.5 16Z" fill="#f7bf7a"/><path d="M7 7L12.5 1.5L16.5 5.5L11 11Z" fill="#6a6a6a"/><path d="M12.5 3.5L15 1L16.8 2.8L14.3 5.3Z" fill="#f3f3f3"/></svg>
<div class="t" style="left:270.50px;top:81.42px;font-size:12.5px;color:#555;transform:scaleX(1.1993);transform-origin:0 0;-webkit-text-stroke:0.25px #555;">A</div>
<svg class="a" style="left:277.5px;top:79.5px;" width="7" height="3" viewBox="0 0 7 3"><path d="M0 3H6.5L3.25 0Z" fill="#1a7cc4"/></svg>
<div class="t" style="left:293.50px;top:83.11px;font-size:10.5px;color:#555;transform:scaleX(1.1851);transform-origin:0 0;-webkit-text-stroke:0.25px #555;">A</div>
<svg class="a" style="left:301.5px;top:79.5px;" width="6" height="3" viewBox="0 0 6 3"><path d="M0 0H5.5L2.75 3Z" fill="#1a7cc4"/></svg>
<svg class="a" style="left:202px;top:109.5px;" width="14" height="14" viewBox="0 0 14 14"><rect x="0.2" y="0.2" width="1" height="1" fill="#777"/><rect x="0.2" y="2.2" width="1" height="1" fill="#777"/><rect x="0.2" y="4.3" width="1" height="1" fill="#777"/><rect x="0.2" y="6.3" width="1" height="1" fill="#777"/><rect x="0.2" y="8.4" width="1" height="1" fill="#777"/><rect x="0.2" y="10.4" width="1" height="1" fill="#777"/><rect x="0.2" y="12.5" width="1" height="1" fill="#777"/><rect x="2.3" y="0.2" width="1" height="1" fill="#777"/><rect x="2.3" y="6.3" width="1" height="1" fill="#777"/><rect x="2.3" y="12.5" width="1" height="1" fill="#777"/><rect x="4.4" y="0.2" width="1" height="1" fill="#777"/><rect x="4.4" y="6.3" width="1" height="1" fill="#777"/><rect x="4.4" y="12.5" width="1" height="1" fill="#777"/><rect x="6.5" y="0.2" width="1" height="1" fill="#777"/><rect x="6.5" y="2.2" width="1" height="1" fill="#777"/><rect x="6.5" y="4.3" width="1" height="1" fill="#777"/><rect x="6.5" y="6.3" width="1" height="1" fill="#777"/><rect x="6.5" y="8.4" width="1" height="1" fill="#777"/><rect x="6.5" y="10.4" width="1" height="1" fill="#777"/><rect x="6.5" y="12.5" width="1" height="1" fill="#777"/><rect x="8.6" y="0.2" width="1" height="1" fill="#777"/><rect x="8.6" y="6.3" width="1" height="1" fill="#777"/><rect x="8.6" y="12.5" width="1" height="1" fill="#777"/><rect x="10.7" y="0.2" width="1" height="1" fill="#777"/><rect x="10.7" y="6.3" width="1" height="1" fill="#777"/><rect x="10.7" y="12.5" width="1" height="1" fill="#777"/><rect x="12.8" y="0.2" width="1" height="1" fill="#777"/><rect x="12.8" y="2.2" width="1" height="1" fill="#777"/><rect x="12.8" y="4.3" width="1" height="1" fill="#777"/><rect x="12.8" y="6.3" width="1" height="1" fill="#777"/><rect x="12.8" y="8.4" width="1" height="1" fill="#777"/><rect x="12.8" y="10.4" width="1" height="1" fill="#777"/><rect x="12.8" y="12.5" width="1" height="1" fill="#777"/><rect x="0" y="12.3" width="13.5" height="1.2" fill="#6a6a6a"/></svg>
<svg class="a" style="left:243px;top:107px;" width="20" height="19" viewBox="0 0 20 19"><path d="M3.3 8L8.5 2.8L13.8 8L8.5 13.3Z" fill="#fff" stroke="#6a6a6a" stroke-width="1.1"/><path d="M8.3 2.6V0.9H6V5" stroke="#6a6a6a" stroke-width="1" fill="none"/><path d="M13.6 6.5Q17.8 8.8 16.3 13Q14.2 11.5 13.6 6.5Z" fill="#1a7cc4"/><rect x="1" y="14" width="16" height="4" fill="#f5dc30"/></svg>
<div class="t" style="left:281.30px;top:109.33px;font-size:13.2px;color:#555;font-weight:bold;transform:scaleX(1.0070);transform-origin:0 0;">A</div>
<div class="a" style="left:278px;top:121px;width:16px;height:4px;background:#ff0000;"></div>
<svg class="a" style="left:329px;top:66px;" width="16" height="70" viewBox="0 0 16 70"><rect x="0" y="4" width="14" height="1.2" fill="#707070"/><rect x="1" y="7" width="12" height="1.2" fill="#707070"/><rect x="0" y="10.2" width="14" height="1.2" fill="#707070"/></svg>
<svg class="a" style="left:351px;top:66px;" width="16" height="70" viewBox="0 0 16 70"><rect x="0" y="8" width="14" height="1.2" fill="#707070"/><rect x="1" y="11" width="12" height="1.2" fill="#707070"/><rect x="0" y="14.2" width="14" height="1.2" fill="#707070"/></svg>
<div class="a" style="left:369px;top:67px;width:22px;height:23px;background:#c5c5c5;"></div>
<svg class="a" style="left:373px;top:66px;" width="16" height="70" viewBox="0 0 16 70"><rect x="0" y="13" width="14" height="1.2" fill="#707070"/><rect x="1" y="16" width="12" height="1.2" fill="#707070"/><rect x="0" y="19.2" width="14" height="1.2" fill="#707070"/></svg>
<svg class="a" style="left:329px;top:66px;" width="16" height="70" viewBox="0 0 16 70"><rect x="0" y="30" width="14" height="1.2" fill="#707070"/><rect x="0" y="33" width="10" height="1.2" fill="#707070"/><rect x="0" y="36" width="14" height="1.2" fill="#707070"/><rect x="0" y="39" width="10" height="1.2" fill="#707070"/></svg>
<svg class="a" style="left:351px;top:66px;" width="16" height="70" viewBox="0 0 16 70"><rect x="0" y="30" width="14" height="1.2" fill="#707070"/><rect x="2" y="33" width="10" height="1.2" fill="#707070"/><rect x="0" y="36" width="14" height="1.2" fill="#707070"/><rect x="2" y="39" width="10" height="1.2" fill="#707070"/></svg>
<svg class="a" style="left:373px;top:66px;" width="16" height="70" viewBox="0 0 16 70"><rect x="0" y="30" width="14" height="1.2" fill="#707070"/><rect x="4" y="33" width="10" height="1.2" fill="#707070"/><rect x="0" y="36" width="14" height="1.2" fill="#707070"/><rect x="4" y="39" width="10" height="1.2" fill="#707070"/></svg>
<div class="t" style="left:398.50px;top:68.81px;font-size:10.5px;color:#555;transform:scaleX(0.9848);transform-origin:0 0;-webkit-text-stroke:0.4px #555;">ab</div>
<div class="t" style="left:398.80px;top:75.91px;font-size:10.5px;color:#555;transform:scaleX(1.1429);transform-origin:0 0;-webkit-text-stroke:0.4px #555;">c</div>
<svg class="a" style="left:405.5px;top:80px;" width="7" height="5" viewBox="0 0 7 5"><path d="M5.8 0.5V2.8H1.5M3 1.3L1.2 2.8L3 4.3" stroke="#1a7cc4" stroke-width="1.1" fill="none"/></svg>
<svg class="a" style="left:396px;top:92px;" width="17" height="17" viewBox="0 0 17 17"><rect x="1.5" y="1.5" width="14" height="14" fill="#fff" stroke="#6a6a6a" stroke-width="1.1"/><path d="M1.5 4.8H15.5M1.5 12.2H15.5M8.5 1.5V4.8M8.5 12.2V15.5" stroke="#6a6a6a" stroke-width="1.1"/><path d="M3.5 8.5H13.5M5.5 6.8L3.6 8.5L5.5 10.2M11.5 6.8L13.4 8.5L11.5 10.2" stroke="#1a7cc4" stroke-width="1.1" fill="none"/></svg>
<svg class="a" style="left:328.2px;top:116px;" width="17" height="15" viewBox="0 0 17 15"><rect x="0" y="1" width="16" height="1.2" fill="#707070"/><rect x="8" y="4" width="8" height="1.2" fill="#707070"/><rect x="8" y="7" width="8" height="1.2" fill="#707070"/><rect x="8" y="10" width="8" height="1.2" fill="#707070"/><rect x="0" y="13" width="16" height="1.2" fill="#707070"/><path d="M1.5 7.6H7M4 4.8L1.2 7.6L4 10.4" stroke="#1a7cc4" stroke-width="1.7" fill="none"/></svg>
<svg class="a" style="left:350px;top:116px;" width="17" height="15" viewBox="0 0 17 15"><rect x="0" y="1" width="16" height="1.2" fill="#707070"/><rect x="8" y="4" width="8" height="1.2" fill="#707070"/><rect x="8" y="7" width="8" height="1.2" fill="#707070"/><rect x="8" y="10" width="8" height="1.2" fill="#707070"/><rect x="0" y="13" width="16" height="1.2" fill="#707070"/><path d="M0 7.6H5.5M3.3 4.8L6.3 7.6L3.3 10.4" stroke="#1a7cc4" stroke-width="1.7" fill="none"/></svg>
<div class="t" style="left:379.5px;top:116px;font-size:11.5px;color:#555;-webkit-text-stroke:0.4px #555;transform:rotate(-52deg);transform-origin:7px 6px">ab</div>
<svg class="a" style="left:386px;top:119px;" width="12" height="13" viewBox="0 0 12 13"><path d="M1.5 11.5L10.8 2.2M7 2.2H10.8V6" stroke="#555" stroke-width="1.1" fill="none"/></svg>
<svg class="a" style="left:541px;top:69px;" width="18" height="18" viewBox="0 0 18 18"><rect x="1.5" y="1.5" width="13.5" height="12.5" fill="#fff" stroke="#6a6a6a" stroke-width="1"/><path d="M10 1.5V14M1.5 5.2H15M1.5 9H15" stroke="#bbb" stroke-width="0.8"/><rect x="2" y="2" width="6.5" height="3" fill="#e97a1f"/><rect x="2" y="6" width="8.5" height="2.8" fill="#1a7cc4"/><rect x="2" y="9.8" width="3.5" height="3.5" fill="#e97a1f"/><rect x="7.3" y="8.3" width="9.2" height="8.5" fill="#fff" stroke="#6a6a6a" stroke-width="1.1"/><path d="M9.5 11.5H14.3M9.5 13.8H14.3M13.2 10L10.8 15.3" stroke="#333" stroke-width="0.9"/></svg>
<svg class="a" style="left:750px;top:69.5px;" width="17" height="17" viewBox="0 0 17 17"><path d="M1.5 1H9V4.3H1.5ZM5.2 1V4.3" fill="#fff" stroke="#6a6a6a" stroke-width="1"/><path d="M1.5 10H9V15.5H1.5ZM1.5 12.8H9M5.2 10V15.5" fill="#fff" stroke="#6a6a6a" stroke-width="1"/><path d="M8 5H16V8.5H8ZM12 5V8.5" fill="#9dcdc4" stroke="#6a6a6a" stroke-width="1"/><path d="M1 6.8H7M3.8 4L1 6.8L3.8 9.6" stroke="#1a7cc4" stroke-width="1.7" fill="none"/></svg>
<svg class="a" style="left:750px;top:92.5px;" width="17" height="17" viewBox="0 0 17 17"><path d="M1.5 1H9V4.3H1.5ZM5.2 1V4.3" fill="#fff" stroke="#6a6a6a" stroke-width="1"/><path d="M1.5 10H9V15.5H1.5ZM1.5 12.8H9M5.2 10V15.5" fill="#fff" stroke="#6a6a6a" stroke-width="1"/><path d="M3 5.3H9V9H3Z" fill="#9dcdc4" stroke="#6a6a6a" stroke-width="1"/><path d="M9 4.5L15.5 11M15.5 4.5L9 11" stroke="#e97a1f" stroke-width="1.6"/></svg>
<svg class="a" style="left:750px;top:115px;" width="17" height="17" viewBox="0 0 17 17"><path d="M2 3.5H13M2 1.8V5.2M13 1.8V5.2M4 2L2.2 3.5L4 5M11 2L12.8 3.5L11 5" stroke="#1a7cc4" stroke-width="1" fill="none"/><rect x="1.5" y="6.5" width="13" height="9.5" fill="#fff" stroke="#6a6a6a" stroke-width="1"/><path d="M1.5 9.3H14.5M1.5 12.3H14.5M5 6.5V16M9 6.5V16M12 6.5V16" stroke="#aaa" stroke-width="0.7"/><rect x="4.3" y="9.2" width="5" height="3.7" fill="#1a7cc4"/></svg>
<svg class="a" style="left:859px;top:69px;" width="17" height="17" viewBox="0 0 17 17"><path d="M14.5 2.2H2.2L8.3 8.5L2.2 14.8H14.5" stroke="#333" stroke-width="2" fill="none"/></svg>
<div class="t" style="left:896.00px;top:69.18px;font-size:9px;color:#1a7cc4;font-weight:bold;transform:scaleX(0.9231);transform-origin:0 0;">A</div>
<div class="t" style="left:897.00px;top:78.18px;font-size:9px;color:#888;transform:scaleX(0.8924);transform-origin:0 0;">Я</div>
<svg class="a" style="left:903.5px;top:74.5px;" width="9" height="8" viewBox="0 0 9 8"><path d="M0.3 0.5H8.3L5.5 4V7.5H3.1V4Z" fill="#666"/></svg>
<svg class="a" style="left:860px;top:92px;" width="16" height="18" viewBox="0 0 16 18"><rect x="1.5" y="1.5" width="13" height="15" fill="#fff" stroke="#6a6a6a" stroke-width="1.1"/><rect x="1" y="1" width="14" height="4" fill="#6a6a6a"/><path d="M8 6.5V14M4.8 10.6L8 13.8L11.2 10.6" stroke="#1a7cc4" stroke-width="2" fill="none"/></svg>
<svg class="a" style="left:895px;top:94px;" width="16" height="15" viewBox="0 0 16 15"><circle cx="9.1" cy="5.3" r="4" fill="#fff" stroke="#1a7cc4" stroke-width="1.8"/><path d="M6.2 8.2L2 12.4" stroke="#1a7cc4" stroke-width="2.4" stroke-linecap="round"/></svg>
<svg class="a" style="left:859px;top:115px;" width="18" height="18" viewBox="0 0 18 18"><g transform="rotate(-45 9 9)"><rect x="4.5" y="5.5" width="12" height="7" rx="1" fill="#f5a75a"/><rect x="1.5" y="5.5" width="3.2" height="7" fill="#f9d79a"/><rect x="0" y="5.5" width="1.5" height="7" fill="#fbe6ad"/><g fill="#e07a30"><circle cx="8" cy="7.8" r="0.6"/><circle cx="11" cy="7.8" r="0.6"/><circle cx="14" cy="7.8" r="0.6"/><circle cx="8" cy="10.2" r="0.6"/><circle cx="11" cy="10.2" r="0.6"/><circle cx="14" cy="10.2" r="0.6"/></g></g></svg>
<svg class="a" style="left:63px;top:689px;" width="14" height="14" viewBox="0 0 14 14"><circle cx="3" cy="3" r="2.9" fill="#50505a"/><rect x="7" y="1.3" width="5.8" height="2.2" fill="#50505a"/><path d="M1.7 7V12.5H12.8V3" stroke="#50505a" stroke-width="1.1" fill="none"/><g fill="#50505a"><rect x="4" y="6.2" width="2" height="1"/><rect x="7" y="6.2" width="2" height="1"/><rect x="10" y="6.2" width="2" height="1"/><rect x="4" y="8.3" width="2" height="1"/><rect x="7" y="8.3" width="2" height="1"/><rect x="10" y="8.3" width="2" height="1"/><rect x="4" y="10.3" width="2" height="1"/><rect x="7" y="10.3" width="2" height="1"/><rect x="10" y="10.3" width="2" height="1"/></g></svg>
<div class="a" style="left:663px;top:686px;width:38px;height:18px;background:#c6c6c6;"></div>
<svg class="a" style="left:675px;top:689px;" width="14" height="14" viewBox="0 0 14 14"><path d="M1 1H13V12.5H1ZM5 1V12.5M9 1V12.5M1 4.8H13M1 8.7H13" stroke="#6a6a6a" stroke-width="1.4" fill="none"/></svg>
<svg class="a" style="left:712px;top:689px;" width="16" height="14" viewBox="0 0 16 14"><rect x="1.5" y="0.8" width="13" height="12" fill="none" stroke="#6a6a6a" stroke-width="1.2"/><rect x="4.5" y="3" width="7" height="7.6" fill="none" stroke="#6a6a6a" stroke-width="1.1"/><path d="M6 5.2H10M6 7H10M6 8.8H10" stroke="#6a6a6a" stroke-width="0.9"/></svg>
<svg class="a" style="left:750px;top:689px;" width="16" height="14" viewBox="0 0 16 14"><rect x="1.5" y="0.8" width="13" height="12" fill="none" stroke="#6a6a6a" stroke-width="1.2"/><path d="M5 0.8V7.3H1.5M8.5 0.8V7.3H5M8.5 5H14.5" stroke="#6a6a6a" stroke-width="1.1" fill="none"/></svg>
<div class="a" style="left:782px;top:695px;width:6px;height:2px;background:#555;"></div>
<div class="a" style="left:792px;top:695.5px;width:100px;height:1px;background:#a8a8a8;"></div>
<div class="a" style="left:840px;top:690px;width:6px;height:11px;background:#6a6a6a;"></div>
<svg class="a" style="left:896px;top:692px;" width="8" height="8" viewBox="0 0 8 8"><path d="M4 0V8M0 4H8" stroke="#555" stroke-width="1.8"/></svg>
<svg class="a" style="left:25px;top:667px;" width="6" height="8" viewBox="0 0 6 8"><path d="M5 0.5V7.5L0.8 4Z" fill="#b8b8b8"/></svg>
<svg class="a" style="left:54px;top:667px;" width="6" height="8" viewBox="0 0 6 8"><path d="M1 0.5V7.5L5.2 4Z" fill="#b8b8b8"/></svg>
<svg class="a" style="left:238px;top:662px;" width="18" height="18" viewBox="0 0 18 18"><circle cx="8.7" cy="8.9" r="7.7" fill="none" stroke="#6a6a6a" stroke-width="1.1"/><path d="M8.7 4.6V13.2M4.4 8.9H13" stroke="#555" stroke-width="1.8"/></svg>
<div class="a" style="left:577px;top:667px;width:2px;height:2px;background:#a8a8a8;"></div>
<div class="a" style="left:577px;top:671px;width:2px;height:2px;background:#a8a8a8;"></div>
<div class="a" style="left:577px;top:675px;width:2px;height:2px;background:#a8a8a8;"></div>
<div class="a" style="left:594px;top:664px;width:15px;height:15px;background:#fff;border:1px solid #c6c6c6;"></div>
<svg class="a" style="left:599px;top:669px;" width="4" height="6" viewBox="0 0 4 6"><path d="M4 0V6L0 3Z" fill="#555"/></svg>
<div class="a" style="left:609px;top:664px;width:286px;height:15px;background:#fff;border:1px solid #b4b4b4;"></div>
<div class="a" style="left:895px;top:664px;width:32px;height:15px;background:#e4e4e4;background-image:repeating-conic-gradient(#cfcfcf 0 25%, #efefef 0 50%);background-size:2px 2px;"></div>
<div class="a" style="left:927px;top:664px;width:15px;height:15px;background:#fff;border:1px solid #c6c6c6;"></div>
<svg class="a" style="left:932px;top:669px;" width="4" height="6" viewBox="0 0 4 6"><path d="M0 0V6L4 3Z" fill="#555"/></svg>
<div class="a" style="left:445px;top:67px;width:58px;height:23px;background:#fff;border:1px solid #ababab;"></div>
<div class="a" style="left:448px;top:71px;width:1px;height:15px;background:#000;"></div>
<div class="a" style="left:501px;top:68px;width:22px;height:22px;background:#a6a6a6;"></div>
<svg class="a" style="left:505px;top:75px;" width="15" height="8" viewBox="0 0 15 8"><path d="M1 1L7.5 7L14 1" stroke="#222" stroke-width="1.3" fill="none"/></svg>
<div class="a" style="left:445px;top:90px;width:237px;height:469px;background:#fff;border:1px solid #c6c6c6;box-shadow:1px 1px 2px rgba(0,0,0,0.15)"></div>
<div class="a" style="left:498px;top:65px;width:29px;height:28px;border:3px solid #ff0000;border-radius:5px;"></div>
<div class="a" style="left:447px;top:136px;width:216px;height:44px;background:#c6c6c6;"></div>
<div class="t" style="left:499.30px;top:99.60px;font-size:11.7px;color:#4a4a4a;font-weight:bold;transform:scaleX(1.0472);transform-origin:0 0;">Общий</div>
<div class="t" style="left:499.50px;top:115.90px;font-size:11.7px;color:#5a5a5a;transform:scaleX(1.0107);transform-origin:0 0;">Формат не указан</div>
<div class="t" style="left:499.30px;top:143.60px;font-size:11.7px;color:#262626;font-weight:bold;transform:scaleX(1.0256);transform-origin:0 0;">Числовой</div>
<div class="t" style="left:499.50px;top:159.90px;font-size:11.7px;color:#262626;transform:scaleX(0.9667);transform-origin:0 0;">=B2*C2</div>
<div class="t" style="left:499.30px;top:187.60px;font-size:11.7px;color:#4a4a4a;font-weight:bold;transform:scaleX(1.0599);transform-origin:0 0;">Денежный</div>
<div class="t" style="left:499.50px;top:203.90px;font-size:11.7px;color:#5a5a5a;transform:scaleX(0.9667);transform-origin:0 0;">=B2*C2</div>
<div class="t" style="left:499.30px;top:231.60px;font-size:11.7px;color:#4a4a4a;font-weight:bold;">Финансовый</div>
<div class="t" style="left:502.80px;top:247.90px;font-size:11.7px;color:#5a5a5a;transform:scaleX(0.9667);transform-origin:0 0;">=B2*C2</div>
<div class="t" style="left:499.30px;top:275.60px;font-size:11.7px;color:#4a4a4a;font-weight:bold;transform:scaleX(0.9838);transform-origin:0 0;">Краткий формат даты</div>
<div class="t" style="left:499.50px;top:291.90px;font-size:11.7px;color:#5a5a5a;transform:scaleX(0.9667);transform-origin:0 0;">=B2*C2</div>
<div class="t" style="left:499.30px;top:319.60px;font-size:11.7px;color:#4a4a4a;font-weight:bold;transform:scaleX(0.9794);transform-origin:0 0;">Длинный формат даты</div>
<div class="t" style="left:499.50px;top:335.90px;font-size:11.7px;color:#5a5a5a;transform:scaleX(0.9667);transform-origin:0 0;">=B2*C2</div>
<div class="t" style="left:499.30px;top:363.60px;font-size:11.7px;color:#4a4a4a;font-weight:bold;">Время</div>
<div class="t" style="left:499.50px;top:379.90px;font-size:11.7px;color:#5a5a5a;transform:scaleX(0.9667);transform-origin:0 0;">=B2*C2</div>
<div class="t" style="left:499.30px;top:407.60px;font-size:11.7px;color:#4a4a4a;font-weight:bold;transform:scaleX(1.0130);transform-origin:0 0;">Процентный</div>
<div class="t" style="left:499.50px;top:423.90px;font-size:11.7px;color:#5a5a5a;transform:scaleX(0.9667);transform-origin:0 0;">=B2*C2</div>
<div class="t" style="left:499.30px;top:451.60px;font-size:11.7px;color:#4a4a4a;font-weight:bold;transform:scaleX(1.0128);transform-origin:0 0;">Дробный</div>
<div class="t" style="left:499.50px;top:467.90px;font-size:11.7px;color:#5a5a5a;transform:scaleX(0.9667);transform-origin:0 0;">=B2*C2</div>
<div class="t" style="left:499.30px;top:495.60px;font-size:11.7px;color:#4a4a4a;font-weight:bold;">Экспоненциальный</div>
<div class="t" style="left:499.50px;top:511.90px;font-size:11.7px;color:#5a5a5a;transform:scaleX(0.9667);transform-origin:0 0;">=B2*C2</div>
<div class="a" style="left:664px;top:94px;width:15px;height:15px;background:#fff;border:1px solid #ababab;"></div>
<svg class="a" style="left:667px;top:98px;" width="9" height="5" viewBox="0 0 9 5"><path d="M0 5H9L4.5 0Z" fill="#777"/></svg>
<div class="a" style="left:664px;top:109px;width:15px;height:369px;background:#fff;border:1px solid #ababab;"></div>
<div class="a" style="left:664px;top:478px;width:15px;height:37px;background:#e6e6e6;"></div>
<div class="a" style="left:664px;top:515px;width:15px;height:15px;background:#fff;border:1px solid #ababab;"></div>
<svg class="a" style="left:667px;top:520px;" width="9" height="5" viewBox="0 0 9 5"><path d="M0 0H9L4.5 5Z" fill="#777"/></svg>
<div class="a" style="left:447px;top:533px;width:232px;height:1px;background:#e1e1e1;"></div>
<svg class="a" style="left:450px;top:94px;" width="40" height="40" viewBox="0 0 40 40"><path d="M7.8 22.5A10.8 10.8 0 1 1 25.8 22.2" stroke="#1e88cc" stroke-width="1.2" fill="none"/><path d="M15.3 11.5V18.6H20" stroke="#606060" stroke-width="1.1" fill="none"/></svg>
<div class="t" style="left:459.80px;top:115.31px;font-size:14.4px;color:#555;transform:scaleX(0.9741);transform-origin:0 0;-webkit-text-stroke:0.3px #555;">123</div>
<div class="t" style="left:454px;top:145px;font-family:'Liberation Mono',monospace;font-size:30px;color:#6b6b6b;font-weight:normal;-webkit-text-stroke:0.8px #6b6b6b;transform:scaleX(0.86);transform-origin:0 0">12</div>
<svg class="a" style="left:454px;top:186px;" width="32" height="32" viewBox="0 0 32 32"><path d="M1 2.5h27.5v15.5H1z" fill="#1a7cc4"/><path d="M4.5 5.5q1.5 0 2-2h16.5q.5 2 2 2v9.5q-1.5 0-2 2H6.5q-.5-2-2-2z" fill="#fff"/><circle cx="14.5" cy="10" r="3.6" fill="#1a7cc4"/><g fill="#f7c06b" stroke="#fff" stroke-width="0.8"><ellipse cx="22" cy="21.5" rx="7" ry="2.8"/><ellipse cx="22" cy="18.5" rx="7" ry="2.8"/><ellipse cx="22" cy="15.5" rx="7" ry="2.8"/><ellipse cx="22" cy="12.5" rx="7" ry="2.8"/><ellipse cx="13" cy="28" rx="7" ry="2.8"/><ellipse cx="13" cy="25" rx="7" ry="2.8"/><ellipse cx="13" cy="22" rx="7" ry="2.8"/></g></svg>
<svg class="a" style="left:456px;top:229px;" width="32" height="36" viewBox="0 0 32 36"><rect x="3.3" y="3.3" width="19" height="27.5" rx="2" fill="#fff" stroke="#707070" stroke-width="1.3"/><rect x="6" y="6" width="14" height="4" fill="#1a7cc4"/><g fill="#8a8a8a"><rect x="6" y="12.5" width="3.5" height="2.5"/><rect x="11" y="12.5" width="3.5" height="2.5"/><rect x="16" y="12.5" width="3.5" height="2.5"/><rect x="6" y="17" width="3.5" height="2.5"/><rect x="11" y="17" width="3.5" height="2.5"/><rect x="16" y="17" width="3.5" height="2.5"/><rect x="6" y="21.5" width="3.5" height="2.5"/><rect x="11" y="21.5" width="3.5" height="2.5"/><rect x="16" y="21.5" width="3.5" height="2.5"/><rect x="6" y="26" width="3.5" height="2.5"/><rect x="11" y="26" width="3.5" height="2.5"/></g><g fill="#f7c06b" stroke="#fff" stroke-width="0.8"><ellipse cx="24" cy="29" rx="5.5" ry="2.3"/><ellipse cx="24" cy="26.5" rx="5.5" ry="2.3"/><ellipse cx="24" cy="24" rx="5.5" ry="2.3"/><ellipse cx="24" cy="21.5" rx="5.5" ry="2.3"/><ellipse cx="18" cy="33" rx="5.5" ry="2.3"/><ellipse cx="18" cy="30.5" rx="5.5" ry="2.3"/></g></svg>
<svg class="a" style="left:455.5px;top:277.5px;" width="27" height="25" viewBox="0 0 27 25"><rect x="0.5" y="0.5" width="26" height="24" fill="#fff" stroke="#777" stroke-width="1"/><rect x="0" y="0" width="27" height="4.5" fill="#6b6b6b"/><rect x="5.6" y="4" width="1" height="20.5" fill="#b8b8b8"/><rect x="10.7" y="4" width="1" height="20.5" fill="#b8b8b8"/><rect x="15.8" y="4" width="1" height="20.5" fill="#b8b8b8"/><rect x="20.9" y="4" width="1" height="20.5" fill="#b8b8b8"/><rect x="0.5" y="9.4" width="26" height="1" fill="#b8b8b8"/><rect x="0.5" y="14.5" width="26" height="1" fill="#b8b8b8"/><rect x="0.5" y="19.6" width="26" height="1" fill="#b8b8b8"/><rect x="14.5" y="8.5" width="7.2" height="7" fill="#fff"/><rect x="15.3" y="9.3" width="6" height="5.8" fill="#1a7cc4"/></svg>
<svg class="a" style="left:455.5px;top:321.5px;" width="27" height="25" viewBox="0 0 27 25"><rect x="0.5" y="0.5" width="26" height="24" fill="#fff" stroke="#777" stroke-width="1"/><rect x="0" y="0" width="27" height="4.5" fill="#6b6b6b"/><rect x="5.6" y="4" width="1" height="20.5" fill="#b8b8b8"/><rect x="10.7" y="4" width="1" height="20.5" fill="#b8b8b8"/><rect x="15.8" y="4" width="1" height="20.5" fill="#b8b8b8"/><rect x="20.9" y="4" width="1" height="20.5" fill="#b8b8b8"/><rect x="0.5" y="9.4" width="26" height="1" fill="#b8b8b8"/><rect x="0.5" y="14.5" width="26" height="1" fill="#b8b8b8"/><rect x="0.5" y="19.6" width="26" height="1" fill="#b8b8b8"/><rect x="14.5" y="8.5" width="7.2" height="7" fill="#fff"/><rect x="15.3" y="9.3" width="6" height="5.8" fill="#1a7cc4"/></svg>
<svg class="a" style="left:454px;top:363px;" width="30" height="30" viewBox="0 0 30 30"><circle cx="15" cy="15" r="13.3" stroke="#1e88cc" stroke-width="1.3" fill="none"/><path d="M14.5 5.3V15.3H22" stroke="#5a5a5a" stroke-width="1.6" fill="none"/></svg>
<div class="t" style="left:455.50px;top:406.07px;font-size:33px;color:#4f4f58;transform:scaleX(0.8690);transform-origin:0 0;-webkit-text-stroke:0.1px #4f4f58;">%</div>
<svg class="a" style="left:453px;top:451px;" width="34" height="32" viewBox="0 0 34 32"><text x="2.5" y="17.5" font-family="Liberation Sans" font-size="20" fill="#636363" stroke="#636363" stroke-width="0.8">1</text><path d="M26 3L8.5 28.5" stroke="#636363" stroke-width="2.6"/><text x="19" y="27.8" font-family="Liberation Sans" font-size="20.5" fill="#636363" stroke="#636363" stroke-width="0.7">2</text></svg>
<div class="t" style="left:456.20px;top:503.54px;font-size:18.5px;color:#666;transform:scaleX(0.8554);transform-origin:0 0;">10</div>
<div class="t" style="left:475.70px;top:499.11px;font-size:10.5px;color:#666;">2</div>
<div class="t" style="left:479.20px;top:539.30px;font-size:11.7px;color:#444;transform:scaleX(1.0192);transform-origin:0 0;">Другие числовые форматы...</div>
<div class="a" style="left:500px;top:550px;width:5px;height:1px;background:#555;"></div>
<svg class="a" style="left:560px;top:140px;" width="110" height="110" viewBox="0 0 110 110"><path d="M17 18Q37 25.5 56.5 27Q47 29.5 42.5 37.5L97 92.7L91.7 97.7L37.5 43Q30 48 26.5 56Q24.5 37 17 18Z" fill="#ff0000"/></svg>
</body></html>
